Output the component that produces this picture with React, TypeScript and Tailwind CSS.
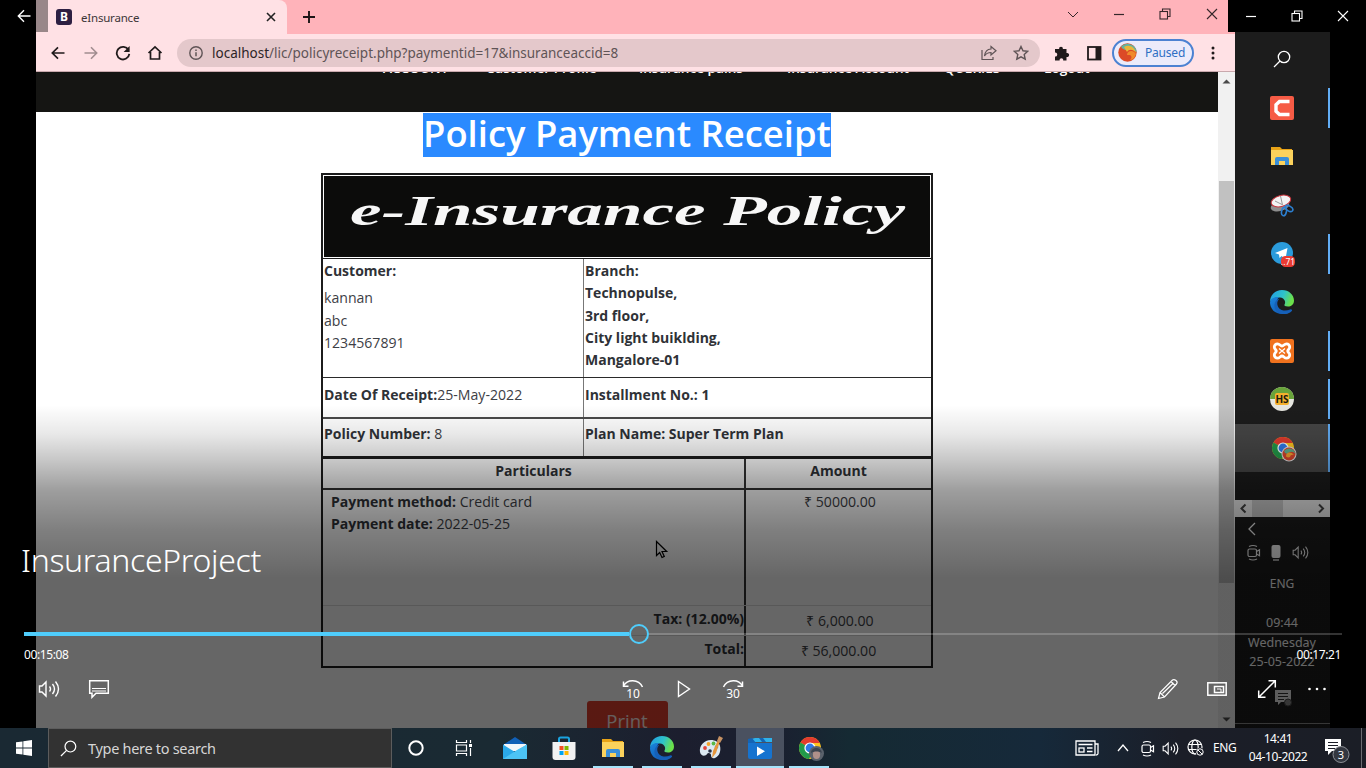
import React from "react";

type Box = { children?: React.ReactNode; size?: number; w?: number; className?: string };

function Svg({ children, size = 24, w, className = "" }: Box) {
  return (
    <svg width={w ?? size} height={size} viewBox={`0 0 ${w ?? size} ${size}`} fill="none" className={`block shrink-0 ${className}`}>
      {children}
    </svg>
  );
}

const Folder = () => (
  <Svg size={24}>
    <path d="M1 3h9l2 2h10v4H1z" fill="#e8a317" />
    <path d="M1 6h22v15H1z" fill="#fbd25c" />
    <path d="M5 21v-6q0-2 2-2h10q2 0 2 2v6h-4v-4H9v4z" fill="#3a8fd8" />
  </Svg>
);

const Edge = ({ id }: { id: string }) => (
  <Svg size={24}>
    <defs>
      <linearGradient id={`${id}a`} x1="0" y1="0" x2="1" y2="0.3">
        <stop offset="0" stopColor="#1f9be8" />
        <stop offset="0.6" stopColor="#2fc3c9" />
        <stop offset="1" stopColor="#6be04a" />
      </linearGradient>
      <linearGradient id={`${id}b`} x1="0" y1="0" x2="1" y2="1">
        <stop offset="0" stopColor="#1a86de" />
        <stop offset="1" stopColor="#0f4ea8" />
      </linearGradient>
    </defs>
    <path d="M0 12C0 5 5 0 12 0c7 0 12 5 12 10.500c0 4-3 6-6 6c-3 0-4-1-3.500-2c1.500-2 .5-6.500-4.500-7C5 7 1 9 0 12z" fill={`url(#${id}a)`} />
    <path d="M0 12C1 8 5 6.500 9 7c-2 2-3 5-2 8c1.500 5 7 7 13 4.500c1-.4 2 .2 1.300 1.200C19 23 16 24 12 24C5 24 0 19 0 12z" fill={`url(#${id}b)`} />
    <path d="M9.500 8.500C6 12 7 17 10 19.500c3 2.500 8 2 11 .5c.8-.4 1.500 0 .8 1c-3 3-7 3.500-9.800 3C7 23 4 19 4.500 14.500C5 11 7 9 9.500 8.500z" fill="#1660b8" />
  </Svg>
);

const Chrome = ({ badge }: { badge: "flame" | "photo" }) => (
  <Svg size={26}>
    <circle cx="12" cy="12" r="11" fill="#fcc31e" />
    <path d="M12 12L2.500 6.500A11 11 0 0 1 21.800 7H12z" fill="#e33b2e" />
    <path d="M12 12L2.500 6.500A11 11 0 0 0 11 23l5-9z" fill="#229a4a" />
    <circle cx="12" cy="12" r="5.600" fill="#fff" />
    <circle cx="12" cy="12" r="4.400" fill="#2f79e8" />
    {badge === "flame" ? (
      <g>
        <circle cx="18" cy="18" r="7.500" fill="#ddd" />
        <circle cx="18" cy="18" r="6.500" fill="#d8432b" />
        <path d="M13 15a6.500 6.500 0 0 1 11.500 3c-2-3-6-3-8 0c-2-.5-3-1.500-3.500-3z" fill="#5fae8b" />
        <path d="M15 20c0-4 5-5 8-1c-2-.5-3.500 0-4 2c-2 1-4 0-4-1z" fill="#f2a12e" />
      </g>
    ) : (
      <g>
        <circle cx="18.500" cy="17.500" r="7.500" fill="#59616b" />
        <ellipse cx="18.500" cy="18.500" rx="3.600" ry="4.500" fill="#b0908a" />
        <path d="M13 17c0-6 10-7 11 0c-3-2-8-2-11 0z" fill="#3c4450" />
      </g>
    )}
  </Svg>
);

const Speaker = ({ s = 22 }: { s?: number }) => (
  <svg width={s} height={s} viewBox="0 0 22 22" fill="none" stroke="currentColor" strokeWidth="1.400" className="block shrink-0">
    <path d="M1.500 8v6h2.500l4 4V4L4 8z" />
    <path d="M11.500 8.500q2 2.500 0 5M14.500 6q4 5 0 10M17.500 3.500q6 7.500 0 15" />
  </svg>
);

const Meet = () => (
  <Svg size={16} className="h-[17px]">
    <g stroke="currentColor" strokeWidth="1.200">
      <rect x="2" y="4.500" width="8.500" height="7.500" rx="1.500" />
      <path d="M10.500 7l3-1.800v6.100l-3-1.800M3 2q4-2 8 0M3 14.500q4 2 8 0" />
    </g>
  </Svg>
);

const Magnifier = ({ s = 18 }: { s?: number }) => (
  <svg width={s} height={s} viewBox="0 0 18 18" fill="none" stroke="currentColor" strokeWidth="1.300" className="block shrink-0">
    <circle cx="11" cy="7" r="5.700" />
    <path d="M7 11L1 17" />
  </svg>
);

const Restore = () => (
  <Svg size={12}>
    <g stroke="currentColor" strokeWidth="1.100">
      <rect x="1" y="3.500" width="7.500" height="7.500" />
      <path d="M3.500 3.500V1H11v7.500H8.500" />
    </g>
  </Svg>
);

const Cross = () => (
  <Svg size={12}>
    <path d="M1 1l10 10M11 1L1 11" stroke="currentColor" strokeWidth="1.100" />
  </Svg>
);

function Tabs() {
  return (
    <div className="flex h-[34px] bg-[#ffb3ba]">
      <div className="flex h-full w-[251px] shrink-0 items-center rounded-tr-[8px] bg-[#ffe1e5] pl-5 text-[#3d3638]">
        <div className="flex h-4 w-4 items-center justify-center rounded-[3px] bg-[#2d1f42] text-[12px] leading-none font-bold text-white">B</div>
        <span className="ml-[9px] w-[58px] pt-px text-[11.500px] tracking-[-0.200px] whitespace-nowrap">eInsurance</span>
        <Svg size={10} className="ml-[127px]"><path d="M1 1l8 8M9 1L1 9" stroke="#222" strokeWidth="1.600" /></Svg>
      </div>
      <Svg size={14} className="mt-[10px] ml-[15px]"><path d="M7 1v12M1 7h12" stroke="#1d1416" strokeWidth="1.900" /></Svg>
      <div className="ml-auto flex w-[168px] items-center pb-[6px] text-[#35262a]">
        <Svg size={12}><path d="M1 4l5 5 5-5" stroke="currentColor" /></Svg>
        <Svg size={12} className="ml-[34px]"><path d="M1 6.500h10" stroke="currentColor" strokeWidth="1.200" /></Svg>
        <div className="ml-[34px]"><Restore /></div>
        <div className="ml-[35px]"><Cross /></div>
      </div>
    </div>
  );
}

function Toolbar() {
  return (
    <div className="flex h-[38px] items-center border-b border-[#c9a9ad] bg-[#ffe1e5] pl-[15px] text-[#201a1b]">
      <Svg size={14}><path d="M13.500 7H1.500M7 1.300L1.300 7L7 12.700" stroke="currentColor" strokeWidth="1.700" /></Svg>
      <Svg size={14} className="ml-[19px] text-[#a18d90]"><path d="M.5 7h12M7 1.300L12.700 7L7 12.700" stroke="currentColor" strokeWidth="1.600" /></Svg>
      <Svg size={16} className="ml-[17px]">
        <path d="M13.500 5A6.300 6.300 0 1 0 14.300 8.800" stroke="currentColor" strokeWidth="1.800" />
        <path d="M14.600 1v6H8.600z" fill="currentColor" />
      </Svg>
      <Svg size={16} className="ml-[16px]"><path d="M1.500 8L8 1.800L14.500 8M3.500 7v7h9V7" stroke="currentColor" strokeWidth="1.700" /></Svg>
      <div className="ml-[14px] flex h-[28px] w-[863px] items-center rounded-full bg-[#e4c8cb] pl-3 text-[#5f5456]">
        <Svg size={14}>
          <circle cx="7" cy="7" r="6.200" stroke="currentColor" strokeWidth="1.400" />
          <path d="M7 6.200v4M7 3.500v1.500" stroke="currentColor" strokeWidth="1.500" />
        </Svg>
        <span className="ml-[9px] pt-px text-[13.500px] whitespace-nowrap">
          <span className="text-[#2d2527]">localhost</span>/lic/policyreceipt.php?paymentid=17&amp;insuranceaccid=8
        </span>
        <Svg size={16} className="ml-auto">
          <g stroke="currentColor" strokeWidth="1.200">
            <path d="M1 5v9.500h11V12" />
            <path d="M10 1.500l5 4.200-5 4.200V7.500C7 7.500 5 8.500 3.500 11C4 7 6 4.200 10 4z" />
          </g>
        </Svg>
        <Svg size={16} className="mr-[11px] ml-[16px]"><path d="M8 1.500l2 4.300 4.700.5-3.500 3.200 1 4.700L8 11.800l-4.200 2.400 1-4.700L1.300 6.300 6 5.800z" stroke="currentColor" strokeWidth="1.400" /></Svg>
      </div>
      <Svg size={16} className="ml-[14px]"><path d="M1 4h4.200C4.500 1 9.500 1 8.800 4H12.500v4c3.500-.8 3.500 4.600 0 4V15.500H9.200c.5-3-4-3-3.600 0H1v-4c3 .5 3-4.500 0-4z" fill="currentColor" /></Svg>
      <Svg size={16} className="ml-[16px]">
        <rect x="2" y="2" width="12.500" height="12.500" stroke="currentColor" strokeWidth="1.800" />
        <path d="M9.500 2h5v12h-5z" fill="currentColor" />
      </Svg>
      <div className="ml-[10px] flex h-[28px] w-[82px] items-center rounded-full border-2 border-[#4c82d2] bg-[#ecebfa] pl-[4px] text-[12px] text-[#2f6fc4]">
        <Svg size={19}>
          <circle cx="9.500" cy="9.500" r="9.200" fill="#dc4a27" />
          <path d="M3 3.500A9.200 9.200 0 0 1 18.700 9.500C16 6 12 5 8.500 7C6 7 4 5.500 3 3.500z" fill="#63b3a0" />
          <path d="M6 4c5-3 11 0 12 6c-3-4-7-4-9-1z" fill="#e9b63a" />
          <path d="M9 12c0-5 7-5 9-1c-1 3-3 6-6 6c2-2 2-4 0-5z" fill="#f08a2b" />
        </Svg>
        <span className="ml-[8px] tracking-[-0.200px]">Paused</span>
      </div>
      <Svg size={16} className="ml-[11px]"><g fill="currentColor"><circle cx="8" cy="3" r="1.500" /><circle cx="8" cy="8" r="1.500" /><circle cx="8" cy="13" r="1.500" /></g></Svg>
    </div>
  );
}

function Cell({ children, className = "" }: { children?: React.ReactNode; className?: string }) {
  return <div className={`whitespace-nowrap ${className}`}>{children}</div>;
}

function Receipt() {
  return (
    <div className="mx-auto mt-[16px] w-[612px] text-[14.100px] leading-[22.300px] text-[#3d4045]">
      <div className="border-2 border-b-2 border-[#1c1c1c]">
        <div className="h-[84px] border-b border-[#1c1c1c] p-px">
          <svg viewBox="0 0 606 81" className="block h-[81px] w-[606px] bg-[#0c0c0b]">
            <text x="26" y="49" textLength="555" lengthAdjust="spacingAndGlyphs" fontFamily="'Liberation Serif',serif" fontStyle="italic" fontWeight="bold" fontSize="42" fill="#f7f7f7">e-Insurance Policy</text>
          </svg>
        </div>
        <div className="flex h-[119px] border-b border-[#2a2a2a]">
          <Cell className="w-[261px] border-r border-[#777] pt-px pl-px">
            <b className="text-[14px] font-bold text-[#2f3237]">Customer:</b>
            <div className="pt-[5px]">kannan<br />abc<br />1234567891</div>
          </Cell>
          <Cell className="pt-px pl-px text-[14px] font-bold text-[#2f3237]">Branch:<br />Technopulse,<br />3rd floor,<br />City light buiklding,<br />Mangalore-01</Cell>
        </div>
        <div className="flex h-[41px] border-b-2 border-[#4a4a4a]">
          <Cell className="w-[261px] border-r border-[#777] pt-[6px] pl-px"><b className="text-[14px] font-bold text-[#2f3237]">Date Of Receipt:</b>25-May-2022</Cell>
          <Cell className="pt-[6px] pl-px text-[14px] font-bold text-[#2f3237]">Installment No.: 1</Cell>
        </div>
        <div className="flex h-[37px]">
          <Cell className="w-[261px] border-r border-[#777] pt-[4px] pl-px"><b className="text-[14px] font-bold text-[#2f3237]">Policy Number:</b> 8</Cell>
          <Cell className="pt-[4px] pl-px text-[14px] font-bold text-[#2f3237]">Plan Name: Super Term Plan</Cell>
        </div>
      </div>
      <div className="border-2 border-t-[1px] border-[#1c1c1c]">
        <div className="flex h-[31px] border-b-2 border-[#333] pt-0 text-center text-[14px] font-bold text-[#2f3237]">
          <Cell className="w-[423px] border-r-2 border-[#333] pt-px">Particulars</Cell>
          <Cell className="flex-1 pt-px">Amount</Cell>
        </div>
        <div className="flex h-[116px] border-b border-[#dcdcdc]">
          <Cell className="w-[423px] border-r-2 border-[#333] pt-px pl-2">
            <b className="text-[14px] font-bold text-[#2f3237]">Payment method:</b> Credit card<br />
            <b className="text-[14px] font-bold text-[#2f3237]">Payment date:</b> 2022-05-25
          </Cell>
          <Cell className="flex-1 pt-px pl-[3px] text-center">₹ 50000.00</Cell>
        </div>
        <div className="flex h-[30px] border-b border-[#dcdcdc]">
          <Cell className="w-[423px] border-r-2 border-[#333] pt-[2px] text-right text-[14px] font-bold text-[#2f3237]">Tax: (12.00%)</Cell>
          <Cell className="flex-1 pt-[4px] pl-[3px] text-center">₹ 6,000.00</Cell>
        </div>
        <div className="flex h-[30px]">
          <Cell className="w-[423px] border-r-2 border-[#333] pt-[2px] text-right text-[14px] font-bold text-[#2f3237]">Total:</Cell>
          <Cell className="flex-1 pt-[4px] text-center">₹ 56,000.00</Cell>
        </div>
      </div>
    </div>
  );
}

function Page() {
  return (
    <div className="flex min-h-0 flex-1">
      <div className="flex w-[1182px] flex-col overflow-hidden bg-white font-['Open_Sans',sans-serif]">
        <div className="h-[40px] shrink-0 overflow-hidden bg-[#151513]">
          <div className="-mt-[14px] flex pl-[347px] text-[13.600px] leading-[20px] font-semibold whitespace-nowrap text-white">
            <span className="w-[103px]">ACCOUNT</span>
            <span className="w-[153px]">Customer Profile</span>
            <span className="w-[148px]">Insurance pains</span>
            <span className="w-[157px]">Insurance Account</span>
            <span className="w-[100px]">QUERIES</span>
            <span>Logout</span>
          </div>
        </div>
        <h1 className="mx-auto mt-px h-[44px] w-[408px] shrink-0 bg-[#2a8aff] text-center text-[36.400px] leading-[40px] font-semibold whitespace-nowrap text-white">Policy Payment Receipt</h1>
        <Receipt />
        <div className="mx-auto mt-[33px] h-[40px] w-[81px] shrink-0 rounded-[3px] bg-[#df3e2d] text-center text-[18.500px] leading-[40px] text-white/90">Print</div>
      </div>
      <div className="flex w-[17px] flex-col items-center bg-[#f1f1f1]">
        <Svg size={9} w={9} className="mt-[5px]"><path d="M.5 6.500L4.500 2.500l4 4z" fill="#4a4a4a" /></Svg>
        <div className="mt-[95px] h-[402px] w-[15px] bg-[#c1c1c1]" />
        <Svg size={9} className="mt-auto mb-[4px]"><path d="M.5 2.500l4 4 4-4z" fill="#4a4a4a" /></Svg>
      </div>
    </div>
  );
}

function SideItem({ children, line = "", className = "h-[48.600px]" }: { children: React.ReactNode; line?: string; className?: string }) {
  return (
    <div className={`flex shrink-0 items-center pl-[34px] ${className}`}>
      <div className="flex w-[26px] justify-center">{children}</div>
      {line && <div className={`ml-auto w-[2px] bg-[#62adf5] ${line}`} />}
    </div>
  );
}

function Sidebar() {
  return (
    <div className="flex w-[95px] flex-col bg-[#1c1c1c] pt-[35px] text-white">
      <SideItem><Magnifier s={18} /></SideItem>
      <SideItem line="h-[40px]">
        <Svg size={26}>
          <rect x="1" y="1" width="24" height="24" rx="2" fill="#f65b45" />
          <path d="M20.500 6.500H10.500L7 9.800v6.400l3.500 3.300h10" stroke="#fff" strokeWidth="3.400" />
        </Svg>
      </SideItem>
      <SideItem><Folder /></SideItem>
      <SideItem>
        <Svg size={24}>
          <ellipse cx="10" cy="13" rx="9.500" ry="5" fill="#8d8d8d" transform="rotate(-15 10 13)" />
          <ellipse cx="11" cy="8" rx="10" ry="5.500" fill="#f3f3f3" stroke="#c8343c" transform="rotate(-15 11 8)" />
          <path d="M5 8l7 3.500M10.500 3l2 9" stroke="#999" />
          <ellipse cx="14" cy="18.500" rx="2.400" ry="4.300" stroke="#2c7fd0" strokeWidth="1.600" transform="rotate(12 14 18.500)" />
          <ellipse cx="19" cy="15.500" rx="4.200" ry="2.400" stroke="#2c7fd0" strokeWidth="1.600" transform="rotate(30 19 15.500)" />
        </Svg>
      </SideItem>
      <SideItem line="h-[40px]">
        <Svg size={26}>
          <circle cx="13" cy="12" r="11" fill="#2b9bdb" />
          <path d="M6 12L18.500 7l-2 11-4-3-2 2-.500-3.500z" fill="#fff" />
          <rect x="12" y="15" width="14" height="11" rx="4.500" fill="#ea3b33" />
          <text x="19" y="23.500" fontSize="8.500" fill="#fff" textAnchor="middle">..71</text>
        </Svg>
      </SideItem>
      <SideItem><Edge id="se" /></SideItem>
      <SideItem line="h-[40px]">
        <Svg size={26}>
          <rect x="1" y="1" width="24" height="24" rx="2" fill="#f0721e" />
          <path d="M8.500 5.800c2.200 0 2.800 2.200 4.500 2.200s2.300-2.200 4.500-2.200a3.200 3.200 0 0 1 3.200 3.200c0 2.200-2 2.600-2 4s2 1.800 2 4a3.200 3.200 0 0 1-3.200 3.200c-2.200 0-2.800-2.200-4.500-2.200s-2.300 2.200-4.500 2.200A3.200 3.200 0 0 1 5.300 17c0-2.200 2-2.600 2-4s-2-1.800-2-4a3.200 3.200 0 0 1 3.200-3.200z" stroke="#fff" strokeWidth="2.800" />
          <path d="M10 10.500l6 5M16 10.500l-6 5" stroke="#fff" strokeWidth="1.200" />
        </Svg>
      </SideItem>
      <SideItem line="h-[40px]">
        <Svg size={26}>
          <circle cx="13" cy="13" r="12" fill="#e6e6e0" />
          <path d="M1 13a12 12 0 0 1 24 0z" fill="#68a33a" />
          <rect x="6" y="7" width="14" height="12" rx="2" fill="#f4b02d" />
          <text x="13" y="17" fontSize="10" fontWeight="bold" fill="#1a1a10" textAnchor="middle">HS</text>
        </Svg>
      </SideItem>
      <SideItem className="h-[48px] bg-[#464646]" line="h-[48px]"><div className="pt-[2px] pl-1"><Chrome badge="flame" /></div></SideItem>
      <div className="mt-[28px] flex h-[17px] shrink-0 items-center bg-[#f0f0f0] text-[#444]">
        <Svg size={17}><path d="M10.500 4.500l-4 4 4 4" stroke="currentColor" strokeWidth="2" /></Svg>
        <div className="h-full w-[31px] bg-[#cdcdcd]" />
        <Svg size={17} className="ml-auto"><path d="M6 4.500l4 4-4 4" stroke="currentColor" strokeWidth="2" /></Svg>
      </div>
      <div className="flex flex-col text-[12.500px] leading-[19px]">
        <Svg size={14} className="mt-[5px] ml-[10px]"><path d="M10 1L4 7l6 6" stroke="currentColor" strokeWidth="1.300" /></Svg>
        <div className="mt-[7px] flex h-[20px] items-center pl-[11px]">
          <Meet />
          <Svg size={18} w={12} className="ml-[8px]"><rect x="1.500" y="1" width="9" height="13" rx="2" fill="#fff" /><path d="M3 15h6v2H3z" fill="#aaa" /></Svg>
          <div className="ml-[10px]"><Speaker s={17} /></div>
        </div>
        <div className="w-[94px] pt-[11px] text-center text-[12px]">ENG</div>
        <div className="w-[94px] pt-[20px] text-center">09:44</div>
        <div className="w-[94px] pt-[1px] text-center">Wednesday</div>
        <div className="w-[94px] text-center">25-05-2022</div>
        <Svg size={18} className="mt-[18px] ml-[39px]">
          <path d="M1 1h16v12H7l-3 3v-3H1z" fill="#e9e9e9" /><path d="M4 4.500h10M4 7.500h10M4 10.500h6" stroke="#333" /><circle cx="14" cy="13.500" r="3.500" fill="#888" stroke="#444" />
        </Svg>
        <div className="mt-[16px] h-px bg-[#888]" />
      </div>
    </div>
  );
}

function Ctl({ children }: { children: React.ReactNode }) {
  return <div className="flex h-[48px] w-[50px] items-center justify-center">{children}</div>;
}

function Skip({ n, back }: { n: string; back?: boolean }) {
  return (
    <svg width="22" height="22" viewBox="0 0 22 22" fill="none" className="block">
      <g stroke="#fff" strokeWidth="1.500" transform={back ? "" : "matrix(-1 0 0 1 22 0)"}>
        <path d="M1.500 8C5 1 16.500 .5 20.500 9" />
        <path d="M1.500 3.500v4.800H6.500" />
      </g>
      <text x="11" y="19.500" fontSize="12" fill="#fff" textAnchor="middle">{n}</text>
    </svg>
  );
}

function Player() {
  return (
    <div className="absolute inset-0 flex flex-col bg-[linear-gradient(to_bottom,transparent_405px,rgba(0,0,0,0.09)_434px,rgba(0,0,0,0.22)_460px,rgba(0,0,0,0.38)_490px,rgba(0,0,0,0.5)_530px,rgba(0,0,0,0.6)_578px)] text-white">
      <div className="flex h-[32px] justify-between">
        <div className="flex w-[48px] items-center justify-center bg-black/40">
          <Svg size={14}><path d="M13.500 7H1.500M7 1.300L1.300 7L7 12.700" stroke="currentColor" strokeWidth="1.400" /></Svg>
        </div>
        <div className="flex w-[138px] items-center bg-black pl-[17px]">
          <Svg size={12}><path d="M1 6.500h10" stroke="currentColor" strokeWidth="1.200" /></Svg>
          <div className="ml-[34px]"><Restore /></div>
          <div className="ml-[34px]"><Cross /></div>
        </div>
      </div>
      <div className="mt-[506px] pl-[21px] text-[32px] leading-[44px] font-light tracking-[-0.320px]">InsuranceProject</div>
      <div className="mt-[41px] flex h-[22px] items-center px-6">
        <div className="h-[4px] w-[605px] bg-[#4fcdfc]" />
        <div className="h-[20px] w-[20px] rounded-full border-2 border-[#4fcdfc]" />
        <div className="h-[2px] flex-1 bg-white/20" />
      </div>
      <div className="flex justify-between pt-[2px] pr-[25px] pl-6 text-[12px] leading-[16px] tracking-[-0.400px]">
        <span>00:15:08</span>
        <span>00:17:21</span>
      </div>
      <div className="mt-[2px] flex px-6">
        <Ctl><Speaker s={22} /></Ctl>
        <Ctl>
          <Svg size={20} w={22}>
            <path d="M1.700 1.700h18.600v12.600H8l-4 4v-4H1.700z" stroke="#fff" strokeWidth="1.500" />
            <path d="M4 9.500h14M4 12h14" stroke="#fff" />
          </Svg>
        </Ctl>
        <div className="ml-[484px] flex">
          <Ctl><Skip n="10" back /></Ctl>
          <Ctl><Svg size={18} w={14} className="ml-[2px]"><path d="M1.500 1.500v15L12.500 9z" stroke="#fff" strokeWidth="1.400" /></Svg></Ctl>
          <Ctl><Skip n="30" /></Ctl>
        </div>
        <div className="ml-auto flex">
          <Ctl><Svg size={22} className="ml-px"><path d="M1.500 20.500l1.500-6L15.500 2q1.500-1 3.500 .5t.5 3.500L7.500 19zM14 3.500l4.500 4.500M3 14.500l4.500 4.500M5.500 15.500L16.500 5" stroke="#fff" strokeWidth="1.200" /></Svg></Ctl>
          <Ctl>
            <Svg size={14} w={20}>
              <rect x=".8" y=".8" width="18.400" height="12.400" stroke="#fff" strokeWidth="1.500" />
              <rect x="7.500" y="4.500" width="9" height="6" stroke="#fff" strokeWidth="1.500" />
              <path d="M10 7h4v3" stroke="#fff" />
            </Svg>
          </Ctl>
          <Ctl><Svg size={20}><path d="M2 18L18 2M11.500 1.700h6.800V8.500M1.700 11.500v6.800h6.800" stroke="#fff" strokeWidth="1.500" /></Svg></Ctl>
          <Ctl><Svg size={20}><g fill="#fff"><circle cx="2.500" cy="10" r="1.300" /><circle cx="10" cy="10" r="1.300" /><circle cx="17.500" cy="10" r="1.300" /></g></Svg></Ctl>
        </div>
      </div>
    </div>
  );
}

function Task({ children, open, active }: { children: React.ReactNode; open?: boolean; active?: boolean }) {
  return (
    <div className={`flex h-[40px] w-[48px] shrink-0 flex-col items-center ${active ? "bg-[#4a5160]" : ""}`}>
      <div className="flex h-[38px] items-center pt-[2px]">{children}</div>
      {(open || active) && <div className={`h-[2px] bg-[#a6e4fb] ${active ? "w-full" : "w-[40px]"}`} />}
    </div>
  );
}

function Taskbar() {
  return (
    <div className="flex h-[40px] shrink-0 bg-[linear-gradient(to_right,#1a2933_0,#1a2a33_500px,#1c1e2e_680px,#1a2030_780px,#152a33_850px,#16293a_1040px,#1b1e28_1180px,#1b1e26_1366px)] text-white">
      <div className="flex w-[48px] items-center justify-center">
        <Svg size={16}><path d="M0 2.300L6.500 1.400V7.500H0zM7.300 1.300L16 0V7.500H7.300zM0 8.400h6.500v6.200L0 13.700zM7.300 8.400H16V16l-8.700-1.300z" fill="#fff" /></Svg>
      </div>
      <div className="flex w-[344px] items-center border border-[#5c5c5c] bg-[#323232] pl-[11px]">
        <Magnifier s={17} />
        <span className="ml-[11px] pt-px text-[14.500px] tracking-[-0.300px] whitespace-nowrap text-[#d6d6d6]">Type here to search</span>
      </div>
      <Task><Svg size={18}><circle cx="9" cy="9" r="6.700" stroke="#fff" strokeWidth="2" /></Svg></Task>
      <Task>
        <Svg size={18}>
          <g stroke="#fff" strokeWidth="1.200"><path d="M1.500 1v2.500h10V1M1.500 17v-2.500h10V17M1.500 6h10v6h-10zM15.500 1v3M15.500 9v8" /></g>
          <rect x="14" y="5" width="3" height="3" fill="#fff" />
        </Svg>
      </Task>
      <div className="ml-[3px] flex gap-px">
        <Task>
          <Svg size={24}>
            <path d="M0 9L12 1l12 8v3H0z" fill="#1160b7" /><path d="M1 8h22v7H1z" fill="#f3f6fa" />
            <path d="M0 8.500L12 16 24 8.500V23H0z" fill="#2ba9ea" /><path d="M0 23l14-9 10-5.500V23z" fill="#4cc3f5" />
          </Svg>
        </Task>
        <Task>
          <Svg size={24}>
            <path d="M7 6V3q0-1.500 1.500-1.500h7Q17 1.500 17 3v3" stroke="#1aa3e0" strokeWidth="2" />
            <path d="M.5 6h23v15q0 3-3 3h-17q-3 0-3-3z" fill="#f2f2f2" />
            <path d="M7.500 10h4v4h-4z" fill="#f25022" /><path d="M12.500 10h4v4h-4z" fill="#7fba00" /><path d="M7.500 15h4v4h-4z" fill="#00a4ef" /><path d="M12.500 15h4v4h-4z" fill="#ffb900" />
          </Svg>
        </Task>
        <Task open><Folder /></Task>
        <Task open><Edge id="te" /></Task>
        <Task open>
          <Svg size={24}>
            <path d="M12 4C5 4 0 10 1 16c1 5 6 4 7 2s4-1 4 1 1 4 4 3c5-2 6-8 5-12s-5-6-9-6z" fill="#dce9f2" />
            <circle cx="6" cy="12" r="1.900" fill="#e0453a" /><circle cx="9.500" cy="8" r="1.900" fill="#f3a32b" /><circle cx="14.500" cy="7.500" r="1.900" fill="#58b947" /><circle cx="17.500" cy="11" r="1.800" fill="#3385d6" /><circle cx="11" cy="15" r="1.800" fill="#262f45" />
            <path d="M13 22l1-7 5-11 2 1-4 12z" fill="#e6963c" /><path d="M18 5l2-5 4 2-3 5z" fill="#c79263" />
          </Svg>
        </Task>
        <Task active>
          <Svg size={24}>
            <path d="M0 4l7-2h17v4H0z" fill="#2fb1ea" /><path d="M0 3l4-1 4 5H0zM11 2h4l3 4h-4z" fill="#1464b5" />
            <path d="M0 7h24v14q0 2-2 2H2q-2 0-2-2z" fill="#1673cf" /><path d="M9 10.500v9.500l8-4.700z" fill="#fff" />
          </Svg>
        </Task>
        <Task open><div className="pt-[2px] pl-[3px]"><Chrome badge="photo" /></div></Task>
      </div>
      <div className="ml-auto flex items-center">
        <Svg size={16} w={24}>
          <g stroke="#fff" strokeWidth="1.300"><path d="M1 1h19v14H1zM20 4h3v9.500q0 1.500-2 1.500M3.500 4.500h14M12 8h5.500M12 11.500h5.500" /><rect x="4" y="8" width="5" height="4" /></g>
        </Svg>
        <Svg size={12} className="ml-[18px]"><path d="M1 9l5-6 5 6" stroke="#fff" strokeWidth="1.300" /></Svg>
        <div className="ml-[11px]"><Meet /></div>
        <div className="ml-[6px]"><Speaker s={17} /></div>
        <Svg size={18} className="ml-[8px]">
          <g stroke="#fff" strokeWidth="1.200"><circle cx="8" cy="8" r="7" /><ellipse cx="8" cy="8" rx="3.200" ry="7" /><path d="M1.500 5.500h13M1.500 10.500h9" /></g>
          <circle cx="13" cy="13" r="4.300" fill="#1b1e28" /><circle cx="13" cy="13" r="3.200" stroke="#fff" /><path d="M10.700 10.700l4.600 4.600" stroke="#fff" />
        </Svg>
        <span className="ml-[8px] w-[24px] text-[12px] tracking-[-0.400px]">ENG</span>
        <div className="ml-[8px] w-[66px] text-center text-[12px] leading-[18px] tracking-[-0.400px] whitespace-nowrap">14:41<br />04-10-2022</div>
        <svg width="26" height="26" viewBox="0 0 26 26" className="mt-[5px] ml-[13px] block">
          <path d="M1 1h16v12H8l-4 4v-4H1z" fill="#fff" /><path d="M4 4.500h10M4 7.500h10M4 10.500h7" stroke="#1b1e28" />
          <circle cx="17" cy="16.500" r="8" fill="#333740" stroke="#8b8e94" /><text x="17" y="20.500" fontSize="11" fill="#fff" textAnchor="middle">3</text>
        </svg>
        <div className="mr-[4px] ml-[11px] h-[40px] w-px bg-[#6b6d72]" />
      </div>
    </div>
  );
}

export default function App() {
  return (
    <div className="flex h-[768px] w-[1366px] flex-col overflow-hidden bg-black font-['Noto_Sans',sans-serif]">
      <div className="relative flex h-[728px] shrink-0 overflow-hidden pl-[36px]">
        <div className="flex w-[1199px] flex-col">
          <Tabs />
          <Toolbar />
          <Page />
        </div>
        <Sidebar />
        <Svg size={20} w={14} className="absolute top-[540px] left-[655px]">
          <path d="M1.500 1.500v14l3.200-3 2.300 5 2.300-1.100-2.300-4.900h4.700z" stroke="#000" strokeWidth="1.200" />
        </Svg>
        <Player />
      </div>
      <Taskbar />
    </div>
  );
}
